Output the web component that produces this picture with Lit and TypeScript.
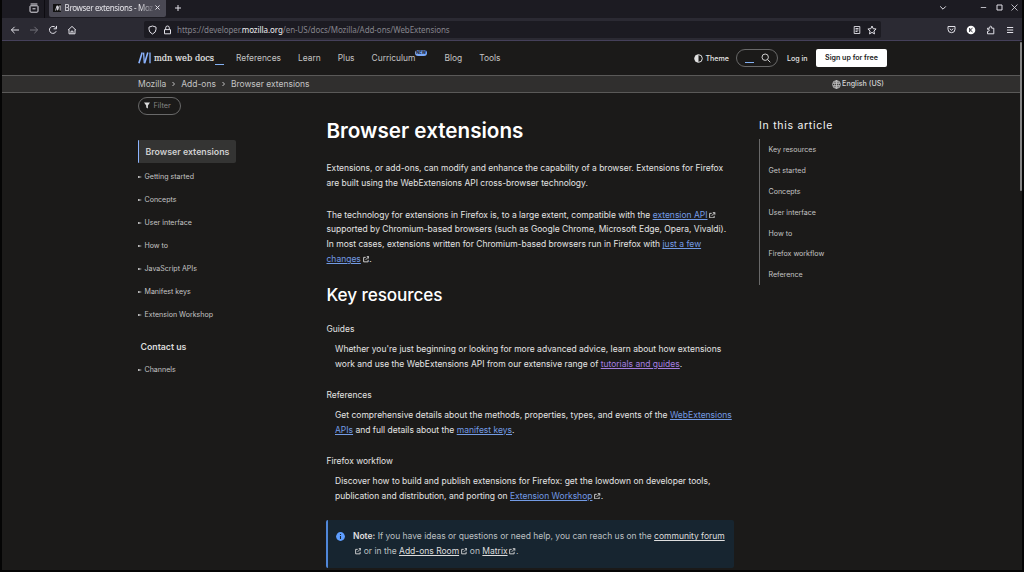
import { LitElement, html, css, svg } from "lit";
import { customElement } from "lit/decorators.js";

const icon = (w: number, h: number, body: unknown, cls = "") =>
  html`<svg class="ic ${cls}" width=${w} height=${h} viewBox="0 0 ${w} ${h}">${body}</svg>`;

const ext = html`<svg class="ext" width="6.5" height="6.5" viewBox="0 0 12 12"><path d="M5 2.5H1.2v8.3h8.3V7M7 1.2h3.8V5M10.6 1.4 5 7" /></svg>`;
const link = (text: string, external = false) =>
  html`<a>${text}</a>${external ? ext : ""}`;

@customElement("browser-chrome")
class BrowserChrome extends LitElement {
  static styles = css`
    :host { display: block; font-family: "Noto Sans", sans-serif; color: #e6e5ea; }
    .tabs { height: 18px; background: #1c1b22; display: flex; }
    .view { width: 43px; box-sizing: border-box; border-right: 1px solid #0d0c11; padding-top: 2.5px; padding-left: 27px; }
    .tab { margin: 0 0 1.5px 3.5px; width: 117px; background: #4a4954; border-radius: 0 0 2px 2px; display: flex; align-items: center; padding: 0 5px 1px 4px; box-sizing: border-box; font-size: 8px; }
    .fav { width: 8px; height: 8px; background: #111; flex: none; display: flex; align-items: center; justify-content: center; }
    .title { margin-left: 4px; width: 88px; letter-spacing: -0.32px; white-space: nowrap; mask-image: linear-gradient(90deg, #000 84%, transparent 104%); line-height: 12px; }
    .tab .ic { margin-left: 2.5px; }
    .plus { margin: 3.5px 0 0 8px; }
    .win { margin-left: auto; display: flex; align-items: center; height: 15px; padding-right: 4px; }
    .bar { height: 23px; background: #2b2a33; display: flex; align-items: center; border-bottom: 1px solid #45405a; box-sizing: border-box; padding-top: 1px; }
    .nav { display: flex; gap: 9px; padding-left: 8px; width: 134px; }
    .url { width: 737px; height: 17px; background: #1c1b22; border-radius: 2px; display: flex; align-items: center; font-size: 8px; color: #85848c; letter-spacing: -0.065px; line-height: 16px; box-sizing: border-box; padding: 0 4px 0 4px; white-space: nowrap; }
    .url b { font-weight: 400; color: #f0f0f2; }
    .url .text { margin-left: 5px; }
    .url .end { margin-left: auto; display: flex; gap: 6px; }
    .url .lock { margin-left: 6px; }
    .tools { margin-left: auto; display: flex; gap: 10px; align-items: center; padding-right: 8px; }
    .ic { display: block; fill: none; stroke: #e2e1e8; stroke-width: 1; flex: none; }
    .dim { opacity: 0.4; }
    .thin { stroke-width: 0.8; }
    .gap1 { margin-right: 33px; }
    .gap2 { margin-right: 8.5px; }
  `;
  render() {
    return html`
      <div class="tabs">
        <div class="view">${icon(10, 10, svg`<path d="M1.6 1h6.8M1 3.4q0-.6.6-.6h6.8q.6 0 .6.6v4.8q0 1-1 1H2q-1 0-1-1zM3.5 5.8h3" />`)}</div>
        <div class="tab">
          <div class="fav">${icon(6, 6, svg`<path stroke-width=".9" d="M.6 5.5 2 .7M2.5 5V.7M2.6 5.4 4.2.7M5.2.4v5.2" />`)}</div>
          <div class="title">Browser extensions - Moz</div>
          ${icon(5, 5, svg`<path d="M.5.5l4 4M4.5.5l-4 4" />`)}
        </div>
        ${icon(8, 8, svg`<path d="M4 1v6M1 4h6" />`, "plus")}
        <div class="win">
          ${icon(8, 6, svg`<path d="M1.2 1.4 4 4.2l2.8-2.8" />`, "gap1")}
          ${icon(7, 7, svg`<path d="M.8 3.5h5.4" />`, "gap2 thin")}
          ${icon(7, 7, svg`<path d="M1 1h5v5H1z" />`, "gap2")}
          ${icon(7, 7, svg`<path d="M.5.5l6 6M6.5.5l-6 6" />`, "thin")}
        </div>
      </div>
      <div class="bar">
        <div class="nav">
          ${icon(10, 10, svg`<path d="M9 5H1.3M4.6 1.8 1.4 5l3.2 3.2" />`)}
          ${icon(10, 10, svg`<path d="M1 5h7.7M5.4 1.8 8.6 5 5.4 8.2" />`, "dim")}
          ${icon(10, 10, svg`<path d="M8.2 6.2A3.5 3.5 0 1 1 7.6 2.6M8.5.9v2.9H5.6" />`)}
          ${icon(10, 10, svg`<path d="M1 5.2 5 1.4l4 3.8M2 4.6v4.2h6V4.6M4 8.6V6.2h2v2.4" />`)}
        </div>
        <div class="url">
          ${icon(9, 10, svg`<path d="M4.5 1 8 2.1v2.2Q8 7.5 4.5 9 1 7.5 1 4.3V2.1z" />`)}
          ${icon(9, 10, svg`<path d="M1.5 4.6h6v4.2h-6zM2.7 4.5V2.8a1.8 1.8 0 0 1 3.6 0v1.7" />`, "lock")}
          <span class="text">https://developer.<b>mozilla.org</b>/en-US/docs/Mozilla/Add-ons/WebExtensions</span>
          <span class="end">
            ${icon(8, 10, svg`<path d="M1.2 1.5h5.6v7H1.2zM2.5 3.5h3M2.5 5h3M2.5 6.5h2" stroke-width=".9" />`)}
            ${icon(10, 10, svg`<path d="M5 1l1.2 2.7 2.9.3-2.2 2 .6 2.9L5 7.4 2.5 8.9l.6-2.9-2.2-2 2.900-.3z" />`)}
          </span>
        </div>
        <div class="tools">
          ${icon(9, 9, svg`<path d="M1 1.5h7v2.7a3.5 3.5 0 0 1-7 0zM2.7 3.6l1.8 1.7 1.8-1.7" />`)}
          ${icon(10, 10, svg`<circle cx="5" cy="5" r="4.3" fill="#fff" stroke="none"/><path d="M3.7 3v4M6.5 3.2 4.2 5l2.3 1.9" stroke="#2b2a33" />`)}
          ${icon(10, 10, svg`<path d="M1.5 8.8V6.3q1.8.2 1.8-1.1T1.5 4.3V3.2h2.200q-.3-2 1-2t1 2h2.100v5.600z" />`)}
          ${icon(8, 8, svg`<path d="M1 1.5h6.2M1 4h6.2M1 6.5h6.2" />`)}
        </div>
      </div>`;
  }
}

@customElement("mdn-header")
class MdnHeader extends LitElement {
  static styles = css`
    :host { display: block; font-family: Inter, sans-serif; color: #c4c4c4; }
    .top { height: 34px; box-sizing: border-box; padding: 0 135px 0 136px; display: flex; align-items: center; background: #1b1a19; }
    .logo { display: flex; align-items: center; width: 98px; color: #ededed; }
    .name { font: 400 8.25px/14px "DejaVu Serif", serif; margin-left: 2px; white-space: nowrap; -webkit-text-stroke: 0.15px #ededed; }
    .cursor { width: 8.5px; height: 1px; background: #83b0f2; margin: 13px 0 0 1px; }
    .ic { display: block; flex: none; fill: none; stroke: #d0d0d0; }
    nav { display: flex; font-size: 8.42px; line-height: 14px; gap: 17px; }
    nav span { position: relative; }
    .new { position: absolute; left: 43.5px; top: -1.5px; width: 12px; height: 6.5px; border-radius: 4px; background: #7ba9f7; color: #15181f; font-size: 4.2px; font-weight: 700; font-style: normal; line-height: 6.5px; text-align: center; }
    .after { margin-right: 12px; }
    .right { margin-left: auto; display: flex; align-items: center; font-size: 7.08px; font-weight: 500; color: #e4e4e4; white-space: nowrap; }
    .theme { display: flex; align-items: center; gap: 2px; }
    .search { width: 42.5px; height: 17.5px; border: 1px solid #696969; border-radius: 9px; box-sizing: border-box; margin: 0 8.5px 0 7px; display: flex; align-items: center; padding: 0 6.5px 0 8px; }
    .search i { width: 9px; height: 1px; background: #83b0f2; margin-top: 9px; margin-right: auto; }
    .signup { background: #fff; color: #1b1b1b; font-weight: 600; width: 71px; height: 17.5px; line-height: 18.5px; text-align: center; border-radius: 2px; margin-left: 8.5px; }
    .crumbs { height: 17.5px; box-sizing: border-box; background: #302f2e; border-top: 1px solid #5a5958; border-bottom: 1px solid #5a5958; display: flex; align-items: center; padding: 0 138px 0 136px; font-size: 8.48px; line-height: 14px; white-space: nowrap; }
    .crumbs .ic { margin: 0 5px; }
    .crumbs .lang { margin-left: auto; display: flex; align-items: center; gap: 1px; font-size: 7.17px; font-weight: 500; color: #d4d4d4; padding-top: 1px; }
    .crumbs .lang .ic { margin: 0; }
  `;
  render() {
    return html`
      <div class="top">
        <div class="logo">
          ${icon(14, 12, svg`<g stroke="#8cb4ff"><path stroke-width="1.6" d="M.9 11.3 4.2.6M6.6 11.3 9.8.6" /><path d="M5.6.6 6.3 11.300M12 .6v10.700" stroke-width="1.300" /></g>`)}
          <span class="name">mdn web docs</span><span class="cursor"></span>
        </div>
        <nav>
          <span>References</span><span>Learn</span><span>Plus</span><span class="after">Curriculum<em class="new">NEW</em></span><span>Blog</span><span>Tools</span>
        </nav>
        <div class="right">
          <span class="theme">${icon(9, 9, svg`<circle cx="4.5" cy="4.5" r="3.8" stroke="#e0e0e0" /><path d="M4.5.7a3.8 3.8 0 0 0 0 7.6z" fill="#e0e0e0" stroke="none" />`)}Theme</span>
          <span class="search"><i></i>${icon(10, 10, svg`<circle cx="4.2" cy="4.2" r="3.2" /><path d="M6.6 6.6 9.3 9.3" />`)}</span>
          <span>Log in</span>
          <span class="signup">Sign up for free</span>
        </div>
      </div>
      <div class="crumbs">
        <span>Mozilla</span>${this.chevron()}<span>Add-ons</span>${this.chevron()}<span>Browser extensions</span>
        <span class="lang">${icon(9, 9, svg`<g stroke-width=".8"><circle cx="4.5" cy="4.5" r="3.9" /><ellipse cx="4.5" cy="4.5" rx="1.8" ry="3.9" /><path d="M.9 3.2h7.2M.9 5.8h7.2M4.5.6v7.8" /></g>`)}English (US)</span>
      </div>`;
  }
  chevron() {
    return icon(5, 6, svg`<path d="M1.5 1l2 2-2 2" stroke-width=".9" />`);
  }
}

@customElement("mdn-sidebar")
class MdnSidebar extends LitElement {
  static styles = css`
    :host { display: block; color: #c4c4c4; font: 7.07px/12px Inter, sans-serif; white-space: nowrap; }
    .filter { width: 43px; height: 17.5px; margin-top: 4.5px; box-sizing: border-box; border: 1px solid #696969; border-radius: 9px; display: flex; align-items: center; gap: 3.5px; padding: 0 0 0 5px; font-size: 7.3px; color: #858585; }
    .current { margin-top: 25px; width: 98px; height: 23.5px; line-height: 24px; box-sizing: border-box; border-left: 1px solid #8cb4ff; background: #343433; border-radius: 1px 2px 2px 1px; padding-left: 6.5px; font-size: 8.81px; font-weight: 600; color: #cfcfcf; }
    .item { height: 23.05px; display: flex; align-items: center; gap: 2.5px; }
    .list { padding-top: 2.5px; }
    .tri { width: 0; height: 0; border: 1.8px solid transparent; border-left: 4px solid #cfcfcf; border-right: 0; }
    h4 { margin: 8.5px 0 0 2.5px; font-size: 8.78px; font-weight: 600; line-height: 24px; color: #dadada; }
    .last { margin-top: -1px; }
  `;
  render() {
    const item = (t: string) => html`<div class="item"><i class="tri"></i>${t}</div>`;
    return html`
      <div class="filter"><svg width="6" height="7" viewBox="0 0 6 7"><path fill="#dcdcdc" d="M0 .5h6L3.9 3.6V6.5L2.2 5.6V3.6z" /></svg>Filter</div>
      <div class="current">Browser extensions</div>
      <div class="list">${["Getting started", "Concepts", "User interface", "How to", "JavaScript APIs", "Manifest keys", "Extension Workshop"].map(item)}</div>
      <h4>Contact us</h4>
      <div class="last">${item("Channels")}</div>`;
  }
}

@customElement("mdn-article")
class MdnArticle extends LitElement {
  static styles = css`
    :host { display: block; color: #e4e4e4; font: 8.51px/14.85px Inter, sans-serif; white-space: nowrap; }
    h1 { margin: 25.4px 0 0; font-size: 20.65px; line-height: 26px; font-weight: 600; color: #fff; }
    h2 { margin: 16px 0 0; font-size: 17.15px; line-height: 24px; font-weight: 500; letter-spacing: -0.08px; color: #fff; }
    p { margin: 16.8px 0 0; }
    p.first { font-size: 8.48px; }
    p.second { margin-top: 17.2px; }
    dl { margin: 15.5px 0 0; }
    dt { line-height: 15px; font-size: 8.45px; }
    dd { margin: 4.3px 0 17px 8.5px; font-size: 8.5px; }
    a { color: #739be4; text-decoration: underline; text-underline-offset: 1.3px; text-decoration-thickness: 1px; }
    a.visited { color: #a57fe0; }
    .ext { margin: 0 0 0 1.9px; fill: none; stroke: #dadada; stroke-width: 1.7; vertical-align: -0.5px; }
    .note { margin-top: 15.5px; margin-left: -0.5px; height: 48px; box-sizing: border-box; background: #172530; border-left: 2px solid #5086d8; border-radius: 2px; padding: 9px 8px 0 8px; display: flex; gap: 8px; color: #bcc0c3; width: 408px; font-size: 8.49px; }
    .note b { font-weight: 600; color: #e0e0e0; }
    .note a { color: #dedede; }
    .info { flex: none; margin-top: 2.5px; }
  `;
  render() {
    return html`
      <h1>Browser extensions</h1>
      <p class="first">Extensions, or add-ons, can modify and enhance the capability of a browser. Extensions for Firefox<br />are built using the WebExtensions API cross-browser technology.</p>
      <p class="second">The technology for extensions in Firefox is, to a large extent, compatible with the ${link("extension API", true)}<br />supported by Chromium-based browsers (such as Google Chrome, Microsoft Edge, Opera, Vivaldi).<br />In most cases, extensions written for Chromium-based browsers run in Firefox with <a>just a few</a><br />${link("changes", true)}.</p>
      <h2>Key resources</h2>
      <dl>
        <dt>Guides</dt>
        <dd>Whether you're just beginning or looking for more advanced advice, learn about how extensions<br />work and use the WebExtensions API from our extensive range of <a class="visited">tutorials and guides</a>.</dd>
        <dt>References</dt>
        <dd>Get comprehensive details about the methods, properties, types, and events of the <a>WebExtensions</a><br /><a>APIs</a> and full details about the <a>manifest keys</a>.</dd>
        <dt>Firefox workflow</dt>
        <dd>Discover how to build and publish extensions for Firefox: get the lowdown on developer tools,<br />publication and distribution, and porting on ${link("Extension Workshop", true)}.</dd>
      </dl>
      <div class="note">
        <svg class="info" width="9" height="9" viewBox="0 0 9 9"><circle cx="4.5" cy="4.5" r="4.4" fill="#5e9eff" /><path d="M4.5 4v3M4.5 2v1" stroke="#172530" stroke-width="1.1" /></svg>
        <div><b>Note:</b> If you have ideas or questions or need help, you can reach us on the <a>community forum</a><br />${ext} or in the ${link("Add-ons Room", true)} on ${link("Matrix", true)}.</div>
      </div>`;
  }
}

@customElement("mdn-toc")
class MdnToc extends LitElement {
  static styles = css`
    :host { display: block; color: #c4c4c4; font: 7.08px/12px Inter, sans-serif; white-space: nowrap; }
    h3 { margin: 24px 0 0; font-size: 10.5px; line-height: 17px; font-weight: 400; letter-spacing: 0.72px; color: #f4f4f4; }
    ul { list-style: none; margin: 5.5px 0 0; padding: 0 0 0 8.5px; border-left: 1px solid #696969; }
    li { height: 20.9px; line-height: 22.6px; }
  `;
  render() {
    return html`<h3>In this article</h3>
      <ul>${["Key resources", "Get started", "Concepts", "User interface", "How to", "Firefox workflow", "Reference"].map((t) => html`<li>${t}</li>`)}</ul>`;
  }
}

@customElement("app-root")
class AppRoot extends LitElement {
  static styles = css`
    :host { display: block; box-sizing: border-box; height: 572px; background: #050505; padding: 0 2px 2px; overflow: hidden; }
    .window { position: relative; height: 570px; background: #1b1a19; overflow: hidden; }
    .page { display: grid; grid-template-columns: 188.5px 432.5px 1fr; padding-left: 136px; }
    .thumb { position: absolute; right: 0; top: 42px; width: 2px; height: 149px; border-radius: 1px; background: #858585; }
  `;
  render() {
    return html`<div class="window">
      <browser-chrome></browser-chrome>
      <mdn-header></mdn-header>
      <div class="page"><mdn-sidebar></mdn-sidebar><mdn-article></mdn-article><mdn-toc></mdn-toc></div>
      <div class="thumb"></div>
    </div>`;
  }
}
